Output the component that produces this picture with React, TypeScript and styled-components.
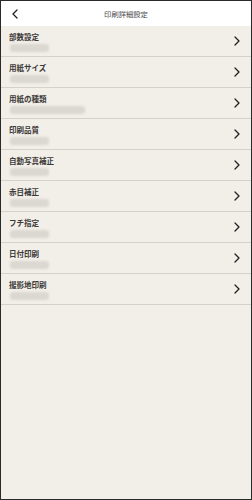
import React from "react";
import styled, { createGlobalStyle } from "styled-components";

const Global = createGlobalStyle`
  html, body { margin: 0; padding: 0; }
  body { font-family: "Noto Sans CJK JP", "Noto Sans", sans-serif; }
`;

const Frame = styled.div`
  box-sizing: border-box;
  width: 252px;
  height: 500px;
  border: 1px solid #2a2a2a;
  background: #f2eee8;
  display: flex;
  flex-direction: column;
  overflow: hidden;
`;

const Header = styled.header`
  height: 25px;
  background: #ffffff;
  display: grid;
  grid-template-columns: 30px 1fr 30px;
  align-items: center;
  flex-shrink: 0;
`;

const BackButton = styled.div`
  display: flex;
  align-items: center;
  padding-left: 10px;
  padding-top: 1px;
`;

const Title = styled.h1`
  margin: 0;
  text-align: center;
  font-size: 7.3px;
  font-weight: 400;
  color: #4a4a4a;
  line-height: 1;
  padding-top: 2px;
`;

const List = styled.ul`
  list-style: none;
  margin: 0;
  padding: 0;
`;

const Row = styled.li`
  box-sizing: border-box;
  height: 31px;
  border-bottom: 1px solid #d6d1c9;
  display: flex;
  align-items: center;
  padding: 0 10px 0 8px;
`;

const Texts = styled.div`
  flex: 1;
  display: flex;
  flex-direction: column;
  gap: 3px;
  padding-top: 2px;
`;

const Label = styled.div`
  font-size: 7.5px;
  line-height: 9px;
  font-weight: 700;
  color: #3c3a38;
`;

const Value = styled.div<{ $w: number }>`
  width: ${(p) => p.$w}px;
  height: 8px;
  margin-left: 1px;
  border-radius: 3px;
  background: #dbd7d1;
  filter: blur(1.3px);
`;

const Chevron = ({ dir }: { dir: "left" | "right" }) => (
  <svg width="8" height="10" viewBox="0 0 8 10">
    <path
      d={dir === "right" ? "M2 1 L6 5 L2 9" : "M6 1 L2 5 L6 9"}
      fill="none"
      stroke="#222"
      strokeWidth="1.3"
      strokeLinecap="round"
      strokeLinejoin="round"
    />
  </svg>
);

const items: { label: string; w: number }[] = [
  { label: "部数設定", w: 39 },
  { label: "用紙サイズ", w: 39 },
  { label: "用紙の種類", w: 75 },
  { label: "印刷品質", w: 39 },
  { label: "自動写真補正", w: 39 },
  { label: "赤目補正", w: 39 },
  { label: "フチ指定", w: 39 },
  { label: "日付印刷", w: 39 },
  { label: "撮影地印刷", w: 39 },
];

export default function App() {
  return (
    <>
      <Global />
      <Frame>
        <Header>
          <BackButton>
            <Chevron dir="left" />
          </BackButton>
          <Title>印刷詳細設定</Title>
          <div />
        </Header>
        <List>
          {items.map((it) => (
            <Row key={it.label}>
              <Texts>
                <Label>{it.label}</Label>
                <Value $w={it.w} />
              </Texts>
              <Chevron dir="right" />
            </Row>
          ))}
        </List>
      </Frame>
    </>
  );
}
